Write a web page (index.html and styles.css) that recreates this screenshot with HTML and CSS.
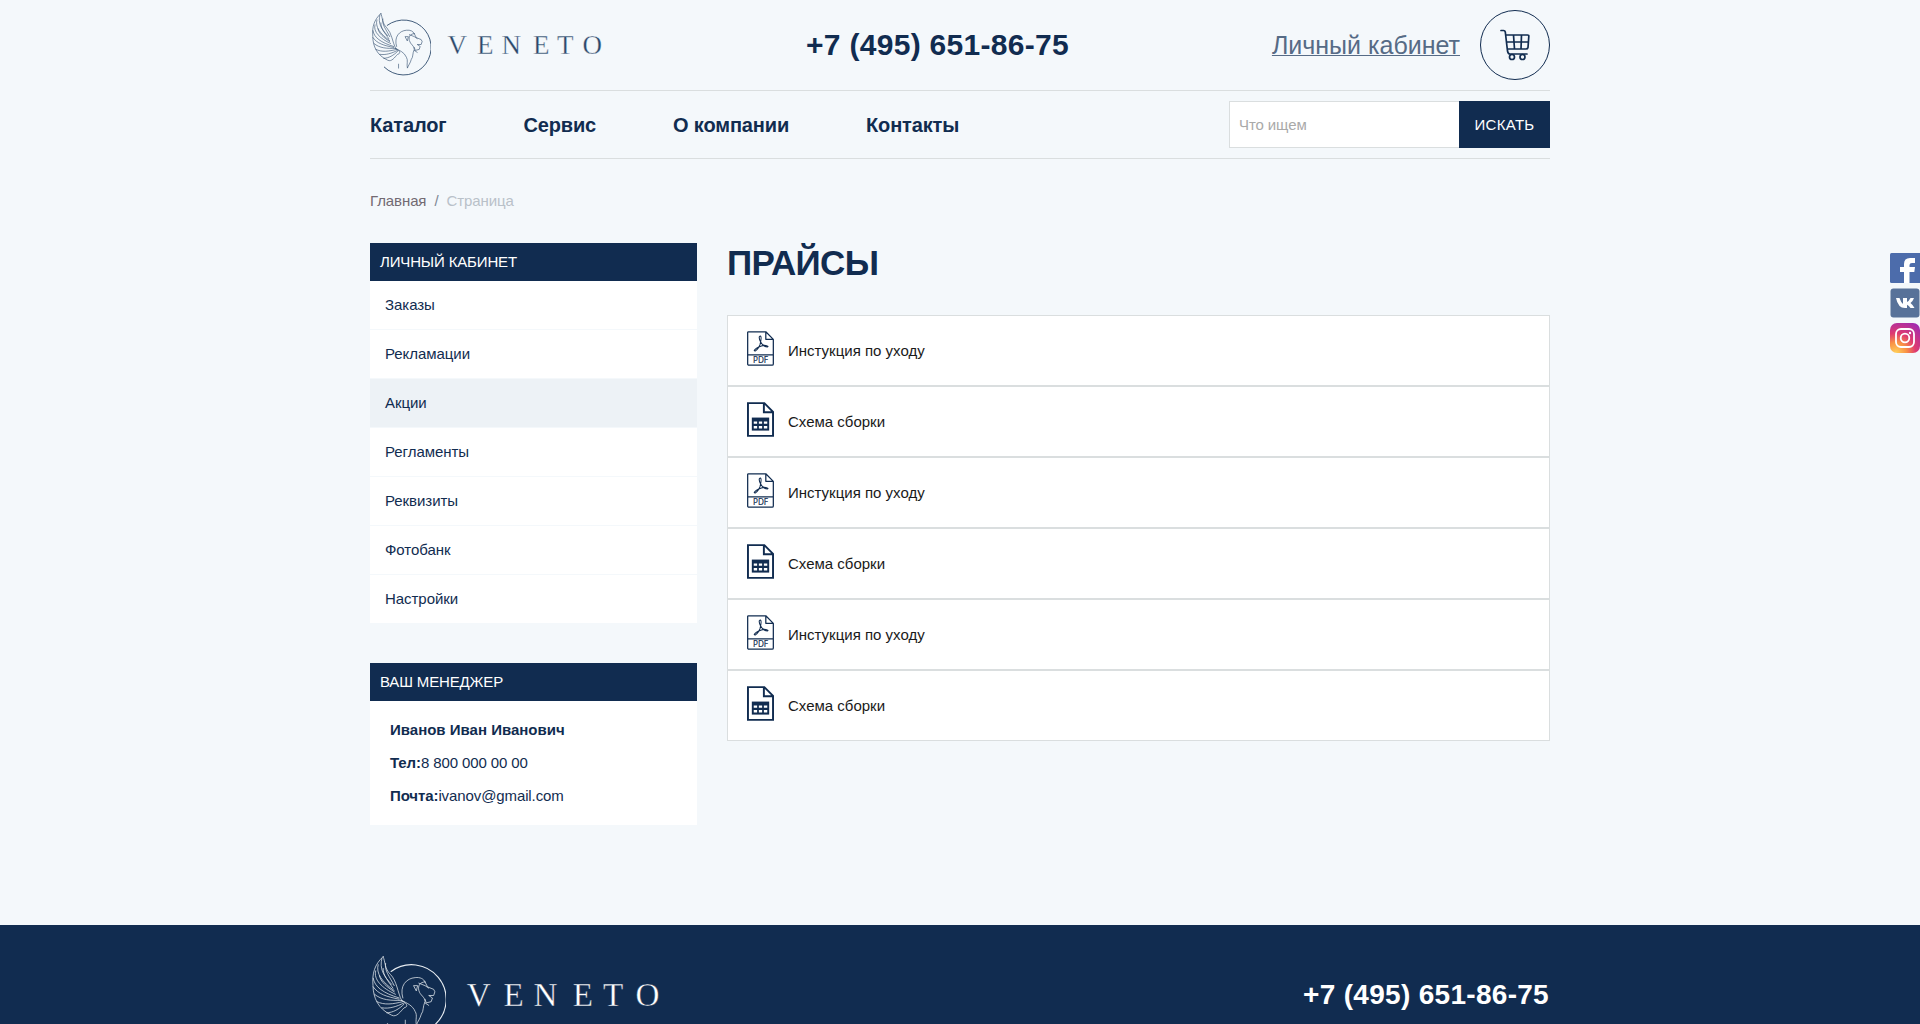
FILE: index.html
```html
<!DOCTYPE html>
<html lang="ru">
<head>
<meta charset="utf-8">
<title>Прайсы — Veneto</title>
<link rel="stylesheet" href="styles.css">
</head>
<body>
<svg class="sprite" aria-hidden="true">
  <symbol id="lion" viewBox="0 0 60 64">
    <g fill="none" stroke="currentColor" stroke-width=".6" stroke-linecap="round" stroke-linejoin="round">
      <path d="M15.500 12.500A28 28 0 1 1 12.500 55" stroke-width=".9"/>
      <path d="M9 .5C2 7 0 14 .8 24C1 34 5 43 16 48C20 50 23 45 26 42C30 41 28 38 24 36C21 30 20 20 15 15C10 10 11 5 9 .5Z"/>
      <path d="M8 2C6 10 9 16 16 23M5 7C3 14 8 21 18 28M3 12C1 19 8 26 19 31M1 18C2 25 9 30 22 34M1 25C5 31 12 33 22 35M2 31C8 36 15 36 24 36M4 37C10 40 17 39 25 37M8 42C14 43 20 41 26 38M12 46C17 46 22 43 26 39M11 6C10 12 14 16 18 24M9 10C9 16 13 20 17 26M6 16C7 21 12 25 18 29"/>
      <path d="M25 34C22 24 28 18 35 17.500C39 17 42 18.500 43 21"/>
      <path d="M43 21C39 21 37 24 38 28C39 32 43 33 43 37C41 41 42 45 40 47C39 51 37 53 36 56C35 52 37 48 35 45C33 40 28 38 24 36"/>
      <path d="M43 21L45 25L50 27L51 29L50 32L46 32L49 34L48 37L44 38L43 35M38 22L43 24L46 26M34 24L37 24L36 28ZM43 38L46 40M27 52V56"/>
    </g>
  </symbol>
  <symbol id="pdf" viewBox="0 0 28 36">
    <g fill="none" stroke="currentColor" stroke-width="1.300" stroke-linejoin="round">
      <path d="M1.500.7H19.500L27.300 8.500V34Q27.300 35.300 26 35.300H2Q.7 35.300 .7 34V1.500Q.7.700 1.500.7ZM19.500.7V8.500H27.300M.7 24.500H27.300"/>
      <path d="M14 5C12 5 12.500 8 14 11C16 14.500 18 16.500 21 16.500C23.500 15.500 19 14 15 15.300C11.500 16.500 8.500 18 7.500 20C8.500 22 12 18 13.500 14C14.500 10 15.500 6 14 5Z" stroke-width="1.100"/>
    </g>
    <text x="14" y="33.200" text-anchor="middle" font-family="Open Sans, sans-serif" font-size="8.500" font-weight="400" stroke="currentColor" stroke-width=".2" fill="currentColor">PDF</text>
  </symbol>
  <symbol id="sheet" viewBox="0 0 28 36">
    <path d="M1 1H18L27 10V35H1ZM17.500 1V10.500H27" fill="none" stroke="currentColor" stroke-width="2"/>
    <path d="M5 16H23V29.500H5Z" fill="currentColor"/>
    <path d="M7 20h3.500v2.500H7zM12.300 20h3.400v2.500h-3.400zM17.500 20H21v2.500h-3.500zM7 24.800h3.500v2.500H7zM12.300 24.800h3.400v2.500h-3.400zM17.500 24.800H21v2.500h-3.500z" fill="#fff"/>
  </symbol>
</svg>

<header class="container">
  <div class="top">
    <a class="logo">
      <svg class="logo-lion"><use href="#lion"/></svg>
      <svg class="logo-word" viewBox="0 0 157 22"><text x="0.500 30 54.500 86 110 135.500" y="20">VENETO</text></svg>
    </a>
    <a class="phone">+7 (495) 651-86-75</a>
    <div class="account">
      <a class="account-link">Личный кабинет</a>
      <a class="cart">
        <svg width="30" height="32" viewBox="0 0 30 32" fill="none" stroke="currentColor" stroke-width="1.700" stroke-linecap="round" stroke-linejoin="round">
          <path d="M1 1.500H3.500Q5 1.500 5.300 3L7.500 22Q8 25 10 25H27M5.800 6H27.500Q29 6 28.800 7.500L28 18.500Q27.700 20 26 20H7.500M7 13H28M13.500 6L14.500 20M21.500 6L21 20"/>
          <circle cx="12" cy="28" r="2.500"/><circle cx="22.500" cy="28" r="2.500"/>
        </svg>
      </a>
    </div>
  </div>
  <div class="bar">
    <nav class="menu"><a>Каталог</a><a>Сервис</a><a>О компании</a><a>Контакты</a></nav>
    <form class="search">
      <input type="text" placeholder="Что ищем">
      <button type="button">ИСКАТЬ</button>
    </form>
  </div>
</header>

<main class="container">
  <div class="crumbs"><a>Главная</a><span class="slash">/</span><span>Страница</span></div>
  <div class="columns">
    <aside>
      <section class="side">
        <h2>ЛИЧНЫЙ КАБИНЕТ</h2>
        <ul>
          <li>Заказы</li><li>Рекламации</li><li class="active">Акции</li><li>Регламенты</li><li>Реквизиты</li><li>Фотобанк</li><li>Настройки</li>
        </ul>
      </section>
      <section class="side manager">
        <h2>ВАШ МЕНЕДЖЕР</h2>
        <div class="manager-body">
          <p><b>Иванов Иван Иванович</b></p>
          <p><b>Тел:</b>8 800 000 00 00</p>
          <p><b>Почта:</b>ivanov@gmail.com</p>
        </div>
      </section>
    </aside>
    <section class="content">
      <h1>ПРАЙСЫ</h1>
      <div class="files">
        <a class="file"><svg><use href="#pdf"/></svg>Инстукция по уходу</a>
        <a class="file"><svg><use href="#sheet"/></svg>Схема сборки</a>
        <a class="file"><svg><use href="#pdf"/></svg>Инстукция по уходу</a>
        <a class="file"><svg><use href="#sheet"/></svg>Схема сборки</a>
        <a class="file"><svg><use href="#pdf"/></svg>Инстукция по уходу</a>
        <a class="file"><svg><use href="#sheet"/></svg>Схема сборки</a>
      </div>
    </section>
  </div>
</main>

<footer>
  <div class="container foot">
    <a class="logo">
      <svg class="logo-lion"><use href="#lion"/></svg>
      <svg class="logo-word" viewBox="0 0 157 22"><text x="0 30 54.500 86.500 111 137.500" y="20">VENETO</text></svg>
    </a>
    <a class="phone">+7 (495) 651-86-75</a>
  </div>
</footer>

<div class="social">
  <svg viewBox="0 0 30 30"><rect width="31" height="30" rx="1.500" fill="#4c6cab"/><path d="M14 30V19H10V14H14V11Q14 5 20 5H25V10H22Q19.500 10 19.500 12V14H25L24.300 19H19.500V30Z" fill="#fff"/></svg>
  <svg viewBox="0 0 30 30"><rect x=".5" y=".5" width="29" height="29" rx="3" fill="#587299"/><path d="M6 10H9.500Q11 14.500 13 16V10H17V14Q19 13 20.500 10H24Q23 13 20.500 15Q23 17 24.500 20H20.500Q19 17.500 17 16.800V20H15Q8 20 6 10Z" fill="#fff"/></svg>
  <svg viewBox="0 0 30 30">
    <defs><radialGradient id="insta" cx=".2" cy="1" r="1.200"><stop offset="0" stop-color="#ffd25a"/><stop offset=".3" stop-color="#f99045"/><stop offset=".55" stop-color="#de3a70"/><stop offset="1" stop-color="#9c2bb5"/></radialGradient></defs>
    <rect width="30" height="30" rx="7" fill="url(#insta)"/>
    <g fill="none" stroke="#fff" stroke-width="1.800"><rect x="6" y="6" width="18" height="18" rx="5"/><circle cx="15" cy="15" r="4.300"/></g><circle cx="20" cy="10" r="1.200" fill="#fff"/>
  </svg>
</div>
</body>
</html>
```
FILE: styles.css
```css
* { box-sizing: border-box; }
body {
  margin: 0;
  height: 1024px;
  overflow: hidden;
  background: #f4f8fb;
  color: #112c50;
  font: 15px/18px "Liberation Sans", Arial, sans-serif;
}
h1, h2, p, ul { margin: 0; padding: 0; }
li { list-style: none; }
.sprite { display: none; }
.container { width: 1180px; margin: 0 auto; }
.top {
  height: 91px;
  display: flex;
  justify-content: space-between;
  border-bottom: 1px solid #dadedf;
}
.top .logo { width: 436px; }
.logo { display: flex; color: #2b486a; }
.logo svg { display: block; }
.top .logo-lion { width: 59px; height: 63px; margin: 13px 0 0 2px; }
.top .logo-word { width: 157px; height: 22px; margin: 34px 0 0 16px; }
.logo-word {
  overflow: visible;
  fill: currentColor;
  stroke: #f4f8fb;
  stroke-width: .3px;
  font: 27px "Liberation Serif", serif;
}
.phone { font-weight: bold; letter-spacing: .3px; white-space: nowrap; }
.top .phone { font-size: 30px; line-height: 89px; flex: 1; }
.account { display: flex; }
.account-link {
  font-size: 25px;
  line-height: 91px;
  color: #566b86;
  text-decoration: underline;
  text-decoration-thickness: 1px;
}
.cart {
  width: 70px;
  height: 70px;
  margin: 10px 0 0 20px;
  border: 1px solid #112c50;
  border-radius: 50%;
  display: flex;
  align-items: center;
  justify-content: center;
}
.bar {
  height: 68px;
  display: flex;
  align-items: center;
  justify-content: space-between;
  border-bottom: 1px solid #dadedf;
}
.menu { display: flex; gap: 77px; font-size: 20px; font-weight: bold; letter-spacing: -.15px; }
.search { display: flex; }
.search input {
  width: 230px;
  height: 47px;
  padding: 0 9px;
  border: 1px solid #dadedf;
  border-right: 0;
  background: #fff;
  font: inherit;
  letter-spacing: -.1px;
}
.search input::placeholder { color: #a9a9a9; }
.search button {
  width: 91px;
  height: 47px;
  padding: 0;
  border: 0;
  background: #112c50;
  color: #fff;
  font: inherit;
  letter-spacing: .3px;
}
.crumbs { display: flex; gap: 8px; padding: 33px 0; color: #726a72; letter-spacing: -.1px; }
.crumbs span { color: #b9c1c9; }
.crumbs .slash { color: #7d8794; }
.columns { display: flex; gap: 30px; }
aside { width: 327px; }
.side h2 {
  height: 38px;
  padding-left: 10px;
  background: #112c50;
  color: #fff;
  font-size: 15px;
  font-weight: normal;
  line-height: 38px;
  letter-spacing: -.15px;
}
.side li {
  height: 49px;
  padding-left: 15px;
  background: #fff;
  border-bottom: 1px solid #f4f8fb;
  line-height: 48px;
  letter-spacing: -.05px;
}
.side .active { background: #edf2f6; }
.manager { margin-top: 39px; }
.manager-body {
  height: 124px;
  padding: 20px;
  background: #fff;
  display: flex;
  flex-direction: column;
  gap: 15px;
  letter-spacing: -.1px;
}
.manager-body p:first-child { letter-spacing: 0; }
.content { flex: 1; }
h1 { font-size: 35px; line-height: 40px; letter-spacing: -.7px; }
.files { margin-top: 32px; }
.file {
  height: 71px;
  padding-left: 19px;
  display: flex;
  align-items: center;
  gap: 14px;
  border: 1px solid #dadedf;
  background: #fff;
  color: #1a1a1a;
}
.file svg { width: 27px; height: 35px; color: #112c50; margin-top: -4px; }
footer { margin-top: 100px; height: 99px; overflow: hidden; background: #112c50; color: #fff; }
.foot { display: flex; justify-content: space-between; }
.foot .logo { color: #e8edf2; }
.foot .logo-lion { width: 74px; height: 79px; margin: 31px 0 0 2px; }
.foot .logo-word { width: 194px; height: 27px; margin: 56px 0 0 20px; fill: #fff; stroke: #112c50; }
.foot .phone { font-size: 28px; line-height: 139px; margin-right: 1px; }
.social { position: fixed; top: 253px; right: 0; display: flex; flex-direction: column; gap: 5px; }
.social svg { display: block; width: 30px; height: 30px; }
```
